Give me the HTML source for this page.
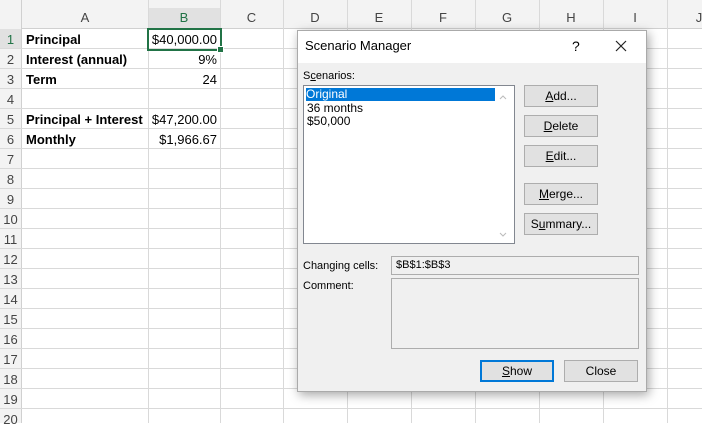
<html><head><style>
body{margin:0;width:702px;height:423px;overflow:hidden;background:#fff;font-family:"Liberation Sans",sans-serif;position:relative}
.a{position:absolute}
.hl{position:absolute;left:0;width:702px;height:1px;background:#d9d9d9}
.vl{position:absolute;top:0;height:423px;width:1px;background:#d9d9d9}
.ch{position:absolute;top:10px;font-size:13px;color:#444;text-align:center}
.rn{position:absolute;left:0;width:21px;font-size:13px;color:#444;text-align:center}
.c{position:absolute;font-size:13px;color:#000}
.btn{position:absolute;width:72px;height:20px;border:1px solid #adadad;background:#e1e1e1;font-size:12px;text-align:center;line-height:20px;color:#000}
</style></head><body>
<div class="a" style="left:0;top:0;width:702px;height:28px;background:#f3f3f3;border-bottom:1px solid #d0d0d0"></div>
<div class="a" style="left:0;top:0;width:21px;height:423px;background:#f3f3f3;border-right:1px solid #d0d0d0"></div>
<div class="a" style="left:148px;top:8px;width:72px;height:20px;background:#e1e1e1;border-bottom:2px solid #217346"></div>
<div class="a" style="left:0;top:29px;width:21px;height:20px;background:#e1e1e1"></div>
<div class="ch" style="left:22px;width:126px">A</div>
<div class="ch" style="left:148px;width:72px;color:#217346">B</div>
<div class="ch" style="left:220px;width:63px">C</div>
<div class="ch" style="left:283px;width:64px">D</div>
<div class="ch" style="left:347px;width:64px">E</div>
<div class="ch" style="left:411px;width:64px">F</div>
<div class="ch" style="left:475px;width:64px">G</div>
<div class="ch" style="left:539px;width:64px">H</div>
<div class="ch" style="left:603px;width:64px">I</div>
<div class="ch" style="left:667px;width:64px">J</div>
<div class="vl" style="left:148px"></div><div class="vl" style="left:220px"></div><div class="vl" style="left:283px"></div><div class="vl" style="left:347px"></div><div class="vl" style="left:411px"></div><div class="vl" style="left:475px"></div><div class="vl" style="left:539px"></div><div class="vl" style="left:603px"></div><div class="vl" style="left:667px"></div>
<div class="hl" style="top:48px"></div><div class="hl" style="top:68px"></div><div class="hl" style="top:88px"></div><div class="hl" style="top:108px"></div><div class="hl" style="top:128px"></div><div class="hl" style="top:148px"></div><div class="hl" style="top:168px"></div><div class="hl" style="top:188px"></div><div class="hl" style="top:208px"></div><div class="hl" style="top:228px"></div><div class="hl" style="top:248px"></div><div class="hl" style="top:268px"></div><div class="hl" style="top:288px"></div><div class="hl" style="top:308px"></div><div class="hl" style="top:328px"></div><div class="hl" style="top:348px"></div><div class="hl" style="top:368px"></div><div class="hl" style="top:388px"></div><div class="hl" style="top:408px"></div>
<div class="rn" style="top:32px;color:#217346">1</div><div class="rn" style="top:52px">2</div><div class="rn" style="top:72px">3</div><div class="rn" style="top:92px">4</div><div class="rn" style="top:112px">5</div><div class="rn" style="top:132px">6</div><div class="rn" style="top:152px">7</div><div class="rn" style="top:172px">8</div><div class="rn" style="top:192px">9</div><div class="rn" style="top:212px">10</div><div class="rn" style="top:232px">11</div><div class="rn" style="top:252px">12</div><div class="rn" style="top:272px">13</div><div class="rn" style="top:292px">14</div><div class="rn" style="top:312px">15</div><div class="rn" style="top:332px">16</div><div class="rn" style="top:352px">17</div><div class="rn" style="top:372px">18</div><div class="rn" style="top:392px">19</div><div class="rn" style="top:412px">20</div>
<div class="c" style="left:26px;top:32px;font-weight:bold">Principal</div>
<div class="c" style="left:26px;top:52px;font-weight:bold">Interest (annual)</div>
<div class="c" style="left:26px;top:72px;font-weight:bold">Term</div>
<div class="c" style="left:26px;top:112px;font-weight:bold">Principal + Interest</div>
<div class="c" style="left:26px;top:132px;font-weight:bold">Monthly</div>
<div class="c" style="left:148px;width:69px;text-align:right;top:32px">$40,000.00</div>
<div class="c" style="left:148px;width:69px;text-align:right;top:52px">9%</div>
<div class="c" style="left:148px;width:69px;text-align:right;top:72px">24</div>
<div class="c" style="left:148px;width:69px;text-align:right;top:112px">$47,200.00</div>
<div class="c" style="left:148px;width:69px;text-align:right;top:132px">$1,966.67</div>
<div class="a" style="left:147px;top:28px;width:71px;height:19px;border:2px solid #217346"></div>
<div class="a" style="left:217px;top:46px;width:5px;height:5px;background:#217346;border:1px solid #fff"></div>

<div class="a" style="left:297px;top:30px;width:348px;height:360px;background:#f0f0f0;border:1px solid #aaa;box-shadow:2px 3px 10px rgba(0,0,0,.35)"></div>
<div class="a" style="left:298px;top:31px;width:348px;height:32px;background:#fff"></div>
<div class="a" style="left:305px;top:38px;font-size:13px">Scenario Manager</div>
<div class="a" style="left:572px;top:38px;font-size:14px">?</div>
<svg class="a" style="left:615px;top:40px" width="12" height="12"><path d="M1 1L11 11M11 1L1 11" stroke="#222" stroke-width="1.2"/></svg>
<div class="a" style="left:303px;top:70px;font-size:11px">S<u>c</u>enarios:</div>
<div class="a" style="left:303px;top:85px;width:210px;height:157px;background:#fff;border:1px solid #828790"></div>
<div class="a" style="left:306px;top:88px;width:189px;height:13px;background:#0078d7;color:#fff;font-size:12px;line-height:13px;outline:1px dotted #fff">Original</div>
<div class="a" style="left:307px;top:101px;font-size:12px">36 months</div>
<div class="a" style="left:307px;top:114px;font-size:12px">$50,000</div>
<svg class="a" style="left:499px;top:94px" width="8" height="6"><path d="M1 5L4 2L7 5" stroke="#bbb" fill="none"/></svg>
<svg class="a" style="left:499px;top:232px" width="8" height="6"><path d="M1 1L4 4L7 1" stroke="#bbb" fill="none"/></svg>
<div class="btn" style="left:524px;top:85px"><u>A</u>dd...</div>
<div class="btn" style="left:524px;top:115px"><u>D</u>elete</div>
<div class="btn" style="left:524px;top:145px"><u>E</u>dit...</div>
<div class="btn" style="left:524px;top:183px"><u>M</u>erge...</div>
<div class="btn" style="left:524px;top:213px">S<u>u</u>mmary...</div>
<div class="a" style="left:303px;top:260px;font-size:11px">Changing cells:</div>
<div class="a" style="left:391px;top:256px;height:17px;border:1px solid #adadad;background:#f0f0f0;font-size:11px;line-height:17px;padding-left:4px;width:242px">$B$1:$B$3</div>
<div class="a" style="left:303px;top:280px;font-size:11px">Comment:</div>
<div class="a" style="left:391px;top:278px;width:246px;height:69px;border:1px solid #adadad;background:#f0f0f0"></div>
<div class="btn" style="left:480px;top:360px;border:2px solid #0078d7;width:70px;height:18px;line-height:18px"><u>S</u>how</div>
<div class="btn" style="left:564px;top:360px">Close</div>
</body></html>
